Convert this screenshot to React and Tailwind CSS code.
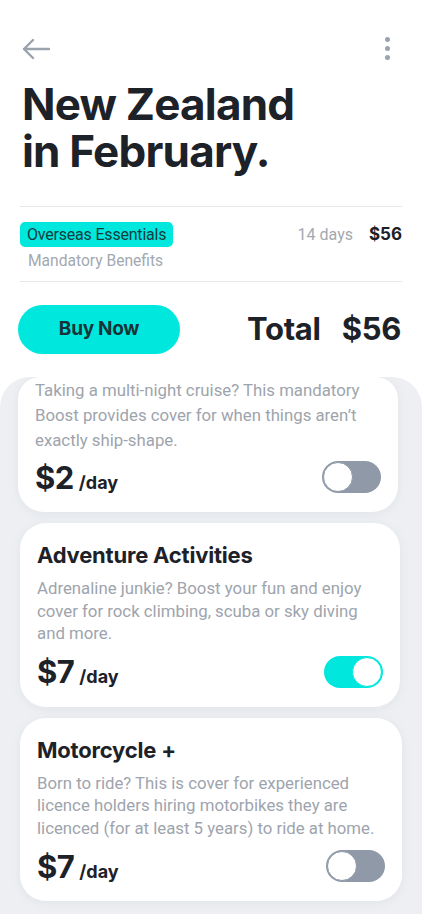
import React, { useState } from 'react';

const Toggle = ({ on, onClick }) => (
    <button
        onClick={onClick}
        className={`relative w-[59px] h-[32px] rounded-full shrink-0 ${on ? 'bg-[#00e8de]' : 'bg-[#8f99a7]'}`}
    >
        <span
            className={`absolute top-[1px] w-[30px] h-[30px] rounded-full bg-white border ${on ? 'right-[1px] border-[#00e8de]' : 'left-[1px] border-[#8f99a7]'}`}
        />
    </button>
);

const Price = ({ amount }) => (
    <div className="flex items-baseline text-[#1d2128] font-bold" style={{ fontFamily: 'Inter, sans-serif' }}>
        <span className="text-[31px] leading-none tracking-[-0.5px]">${amount}</span>
        <span className="text-[18px] ml-[5px] leading-none">/day</span>
    </div>
);

const BoostCard = ({ title, text, amount, on, onToggle, className, textClass, rowClass }) => (
    <div className={`bg-white rounded-[26px] px-[17px] shadow-[0_2px_8px_rgba(160,170,185,0.15)] ${className}`}>
        {title && (
            <h4 className="text-[22px] font-bold text-[#1d2128] leading-[26px] pt-[19px] tracking-[-0.2px]" style={{ fontFamily: 'Inter, sans-serif' }}>
                {title}
            </h4>
        )}
        <p className={`text-[16.8px] text-[#9ea4ad] ${textClass}`} style={{ fontFamily: 'Roboto, sans-serif' }}>
            {text}
        </p>
        <div className={`flex items-center justify-between pb-[19px] ${rowClass}`}>
            <Price amount={amount} />
            <Toggle on={on} onClick={onToggle} />
        </div>
    </div>
);

export default function App() {
    const [cruise, setCruise] = useState(false);
    const [adventure, setAdventure] = useState(true);
    const [moto, setMoto] = useState(false);

    return (
        <div className="w-[422px] h-[914px] bg-white overflow-hidden flex flex-col" style={{ fontFamily: 'Roboto, sans-serif' }}>
            <div className="flex items-center justify-between px-[22px] pt-[37px] h-[60px]">
                <svg width="28" height="22" viewBox="0 0 28 22" fill="none" stroke="#9aa3ae" strokeWidth="2.4" strokeLinecap="round" strokeLinejoin="round">
                    <path d="M27 11H2M11 2L2 11L11 20" />
                </svg>
                <div className="flex flex-col gap-[4px] items-center mr-[10px]">
                    <span className="w-[5px] h-[5px] rounded-full bg-[#9aa3ae]" />
                    <span className="w-[5px] h-[5px] rounded-full bg-[#9aa3ae]" />
                    <span className="w-[5px] h-[5px] rounded-full bg-[#9aa3ae]" />
                </div>
            </div>

            <div className="px-[22px] mt-[21px] text-[44px] font-bold text-[#1d2128] tracking-[-0.8px]" style={{ fontFamily: 'Inter, sans-serif' }}>
                <h1 className="leading-[47px] h-[47px]">New Zealand</h1>
                <h1 className="leading-[47px] h-[47px]">in February.</h1>
            </div>

            <div className="mx-[20px] mt-[31px] border-t border-[#e6e8eb]" />
            <div className="mx-[20px] flex justify-between pt-[15px] pb-[9px]">
                <div>
                    <span className="inline-block bg-[#00e8de] rounded-[5px] px-[7px] h-[25px] leading-[25px] text-[16px] text-[#143c3c] tracking-[-0.2px]">
                        Overseas Essentials
                    </span>
                    <div className="pl-[8px] text-[15.6px] leading-[22px] mt-[3px] text-[#a3a9b1]">Mandatory Benefits</div>
                </div>
                <div className="flex gap-[16px] text-[16px] leading-[25px]">
                    <span className="text-[#a3a9b1]">14 days</span>
                    <span className="font-bold text-[17px] text-[#1d2128]" style={{ fontFamily: 'Inter, sans-serif' }}>$56</span>
                </div>
            </div>
            <div className="mx-[20px] border-t border-[#e6e8eb]" />

            <div className="flex items-center justify-between pl-[18px] pr-[21px] mt-[23px]">
                <button className="w-[162px] h-[49px] rounded-full bg-[#00e8de] text-[19px] font-bold text-[#16333a] tracking-[-0.3px]" style={{ fontFamily: 'Inter, sans-serif' }}>
                    Buy Now
                </button>
                <div className="flex gap-[21px] text-[31px] font-bold text-[#1d2128] tracking-[-0.3px]" style={{ fontFamily: 'Inter, sans-serif' }}>
                    <span>Total</span>
                    <span>$56</span>
                </div>
            </div>

            <div className="mt-[23px] flex-1 rounded-t-[30px] bg-[#edeff2] flex flex-col gap-[11px] overflow-hidden">
                <BoostCard
                    className="ml-[18px] w-[380px] rounded-t-[22px]"
                    textClass="leading-[25px] pt-[1px]"
                    rowClass="mt-[8px]"
                    text="Taking a multi-night cruise? This mandatory Boost provides cover for when things aren’t exactly ship-shape."
                    amount="2"
                    on={cruise}
                    onToggle={() => setCruise(!cruise)}
                />
                <BoostCard
                    className="ml-[20px] w-[380px]"
                    textClass="leading-[22.5px] mt-[9px]"
                    rowClass="mt-[11px]"
                    title="Adventure Activities"
                    text="Adrenaline junkie? Boost your fun and enjoy cover for rock climbing, scuba or sky diving and more."
                    amount="7"
                    on={adventure}
                    onToggle={() => setAdventure(!adventure)}
                />
                <BoostCard
                    className="ml-[20px] w-[382px]"
                    textClass="leading-[22.5px] mt-[9px]"
                    rowClass="mt-[11px]"
                    title="Motorcycle +"
                    text="Born to ride? This is cover for experienced licence holders hiring motorbikes they are licenced (for at least 5 years) to ride at home."
                    amount="7"
                    on={moto}
                    onToggle={() => setMoto(!moto)}
                />
            </div>
        </div>
    );
}
